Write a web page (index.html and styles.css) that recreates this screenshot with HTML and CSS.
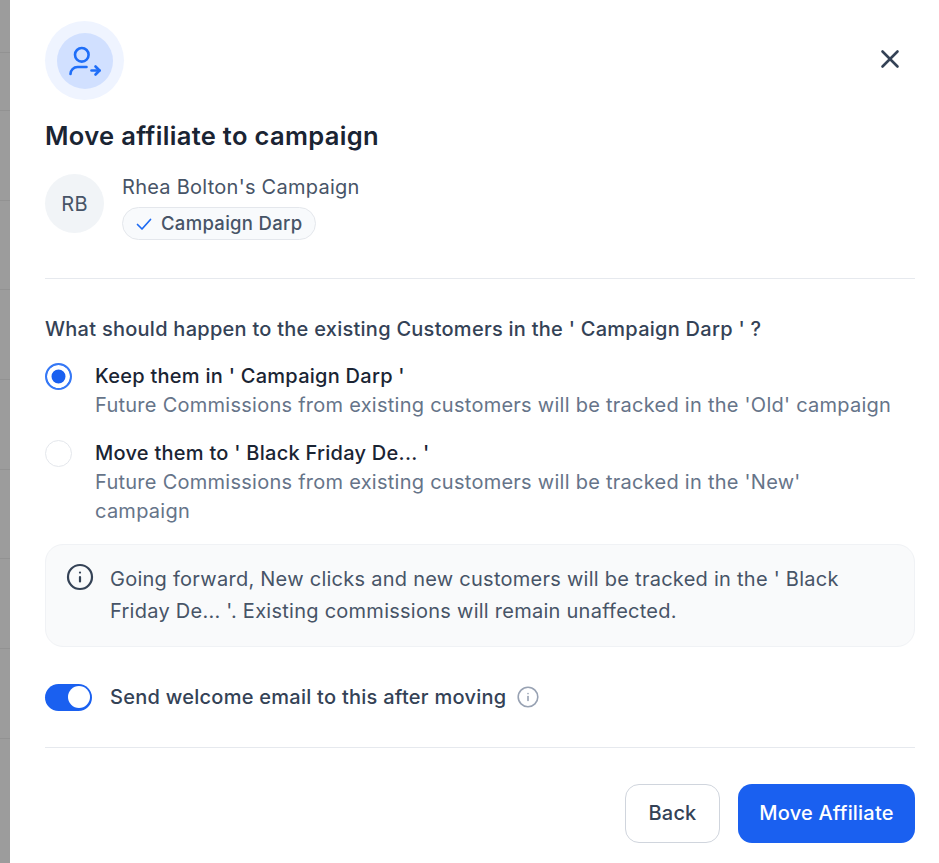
FILE: index.html
```html
<!DOCTYPE html>
<html lang="en">
<head>
    <meta charset="UTF-8">
    <meta name="viewport" content="width=device-width, initial-scale=1.0">
    <title>Move affiliate to campaign</title>
    <link rel="stylesheet" href="styles.css">
</head>
<body>
    <div class="backdrop">
        <div class="backdrop-row backdrop-row-first"></div>
        <div class="backdrop-row"></div>
        <div class="backdrop-row"></div>
        <div class="backdrop-row"></div>
        <div class="backdrop-row"></div>
        <div class="backdrop-row"></div>
        <div class="backdrop-row"></div>
        <div class="backdrop-row"></div>
        <div class="backdrop-row"></div>
    </div>
    <div class="modal">
        <div class="modal-top">
            <div class="icon-ring">
                <div class="icon-circle">
                    <svg xmlns="http://www.w3.org/2000/svg" width="36" height="36" viewBox="0 0 36 36" fill="none" stroke="#1f6ef8" stroke-width="2.6" stroke-linecap="round" stroke-linejoin="round">
                        <circle cx="14.800" cy="11.800" r="6.800"></circle>
                        <path d="M3.500 31a7 7 0 0 1 7-7h9"></path>
                        <path d="M24.500 27.500h8"></path>
                        <path d="M28.500 23.500l4 4-4 4"></path>
                    </svg>
                </div>
            </div>
            <svg class="close" xmlns="http://www.w3.org/2000/svg" width="20" height="20" viewBox="0 0 20 20" fill="none" stroke="#344256" stroke-width="2.6" stroke-linecap="round">
                <line x1="2.500" y1="2.500" x2="17.500" y2="17.500"></line>
                <line x1="17.500" y1="2.500" x2="2.500" y2="17.500"></line>
            </svg>
        </div>

        <h1 class="title">Move affiliate to campaign</h1>

        <div class="affiliate">
            <div class="avatar">RB</div>
            <div>
                <div class="affiliate-name">Rhea Bolton's Campaign</div>
                <div class="badge">
                    <svg xmlns="http://www.w3.org/2000/svg" width="18" height="18" viewBox="0 0 18 18" fill="none" stroke="#1d6bf3" stroke-width="1.7" stroke-linecap="round" stroke-linejoin="round">
                        <path d="M2.500 9.500l4.500 4.500 8.500-9.500"></path>
                    </svg>
                    <span class="badge-label">Campaign Darp</span>
                </div>
            </div>
        </div>

        <div class="divider"></div>

        <p class="question">What should happen to the existing Customers in the ' Campaign Darp ' ?</p>

        <div class="option option-first">
            <span class="radio radio-on"></span>
            <div>
                <div class="option-title">Keep them in ' Campaign Darp '</div>
                <div class="option-text">Future Commissions from existing customers will be tracked in the 'Old' campaign</div>
            </div>
        </div>
        <div class="option">
            <span class="radio"></span>
            <div>
                <div class="option-title">Move them to ' Black Friday De... '</div>
                <div class="option-text">Future Commissions from existing customers will be tracked in the 'New' campaign</div>
            </div>
        </div>

        <div class="notice">
            <svg xmlns="http://www.w3.org/2000/svg" width="28" height="28" viewBox="0 0 28 28" fill="none" stroke="#344256" stroke-width="2.2" stroke-linecap="round">
                <circle cx="14" cy="14" r="12"></circle>
                <line x1="14" y1="14" x2="14" y2="18.500"></line>
                <line x1="14" y1="9.500" x2="14" y2="9.600"></line>
            </svg>
            <p>Going forward, New clicks and new customers will be tracked in the ' Black Friday De... '. Existing commissions will remain unaffected.</p>
        </div>

        <div class="welcome">
            <span class="toggle"><span class="toggle-knob"></span></span>
            <span class="welcome-label">Send welcome email to this after moving</span>
            <svg xmlns="http://www.w3.org/2000/svg" width="22" height="22" viewBox="0 0 22 22" fill="none" stroke="#98a2b3" stroke-width="1.600" stroke-linecap="round">
                <circle cx="11" cy="11" r="9.800"></circle>
                <line x1="11" y1="10.500" x2="11" y2="14.500"></line>
                <line x1="11" y1="7.500" x2="11" y2="7.600"></line>
            </svg>
        </div>

        <div class="divider divider-bottom"></div>

        <div class="actions">
            <button class="btn btn-back">Back</button>
            <button class="btn btn-primary">Move Affiliate</button>
        </div>
    </div>
</body>
</html>
```

FILE: styles.css
```css
* {
    box-sizing: border-box;
}
body {
    font-family: Inter, "Liberation Sans", sans-serif;
    font-size: 20px;
    letter-spacing: 0.26px;
    margin: 0;
    height: 863px;
    display: flex;
    overflow: hidden;
    background-color: white;
    color: #344256;
}
.backdrop {
    width: 10px;
    flex-shrink: 0;
    background-color: #9c9c9c;
    padding-top: 52px;
}
.backdrop-row {
    height: 89.700px;
    border-top: 1px solid #929292;
}
.backdrop-row-first {
    height: 58px;
}
.modal {
    flex: 1;
    padding: 21px 24px 0 35px;
}
.modal-top {
    display: flex;
    justify-content: space-between;
    align-items: flex-start;
}
.icon-ring {
    width: 79px;
    height: 79px;
    border-radius: 50%;
    background-color: #eff4ff;
    display: flex;
    align-items: center;
    justify-content: center;
}
.icon-circle {
    width: 56px;
    height: 56px;
    border-radius: 50%;
    background-color: #d1e0ff;
    display: flex;
    align-items: center;
    justify-content: center;
}
.close {
    margin-top: 28px;
    margin-right: 15px;
}
.title {
    margin: 20px 0 0;
    font-size: 25.500px;
    letter-spacing: 0.32px;
    line-height: 32px;
    font-weight: 600;
    color: #1a2433;
}
.affiliate {
    display: flex;
    gap: 18px;
    margin-top: 22px;
}
.avatar {
    width: 59px;
    height: 59px;
    border-radius: 50%;
    background-color: #f1f4f7;
    display: flex;
    align-items: center;
    justify-content: center;
    color: #475467;
}
.affiliate-name {
    line-height: 26px;
    color: #475467;
}
.badge {
    display: inline-flex;
    align-items: center;
    gap: 8px;
    height: 33px;
    margin-top: 7px;
    padding: 0 13px 0 12px;
    border: 1px solid #e4e7ec;
    border-radius: 17px;
    background-color: #f8fafc;
    font-size: 18.500px;
    letter-spacing: 0.3px;
    font-weight: 500;
    color: #475467;
}
.badge-label {
    margin-top: -2px;
}
.divider {
    height: 1px;
    margin-top: 38px;
    background-color: #e6e9ee;
}
.question {
    margin: 37px 0 0;
    line-height: 26px;
    font-weight: 500;
}
.option {
    display: flex;
    gap: 23px;
    margin-top: 18px;
}
.option-first {
    margin-top: 20px;
}
.radio {
    width: 27px;
    height: 27px;
    flex-shrink: 0;
    margin-top: 1px;
    border-radius: 50%;
    border: 1.500px solid #e4e7ec;
}
.radio-on {
    border: 2px solid #3578f6;
    background-color: #1a60f0;
    box-shadow: inset 0 0 0 4.500px white;
}
.option-title {
    line-height: 29px;
    font-weight: 500;
    color: #1a2433;
}
.option-text {
    max-width: 800px;
    line-height: 29.500px;
    color: #667489;
}
.notice {
    display: flex;
    gap: 16px;
    height: 103px;
    margin-top: 17px;
    padding: 18px 20px;
    border: 1px solid #f0f2f5;
    border-radius: 18px;
    background-color: #f9fafb;
}
.notice svg {
    flex-shrink: 0;
}
.notice p {
    margin: 0;
    line-height: 32px;
    color: #475467;
}
.welcome {
    display: flex;
    align-items: center;
    gap: 18px;
    margin-top: 37px;
}
.welcome-label {
    line-height: 27px;
    font-weight: 500;
    margin-right: -7px;
}
.toggle {
    width: 47px;
    height: 27px;
    padding: 2.500px;
    border-radius: 14px;
    background-color: #1a60f0;
    display: flex;
    justify-content: flex-end;
}
.toggle-knob {
    width: 22px;
    height: 22px;
    border-radius: 50%;
    background-color: white;
}
.divider-bottom {
    margin-top: 36px;
}
.actions {
    display: flex;
    justify-content: flex-end;
    gap: 18px;
    margin-top: 36px;
}
.btn {
    height: 59px;
    border-radius: 14px;
    font-family: inherit;
    font-size: 20px;
    letter-spacing: 0.2px;
    font-weight: 500;
}
.btn-back {
    width: 95px;
    border: 1.500px solid #d0d5dd;
    background-color: white;
    color: #344256;
}
.btn-primary {
    width: 177px;
    border: none;
    background-color: #1a60f0;
    color: white;
}
```
